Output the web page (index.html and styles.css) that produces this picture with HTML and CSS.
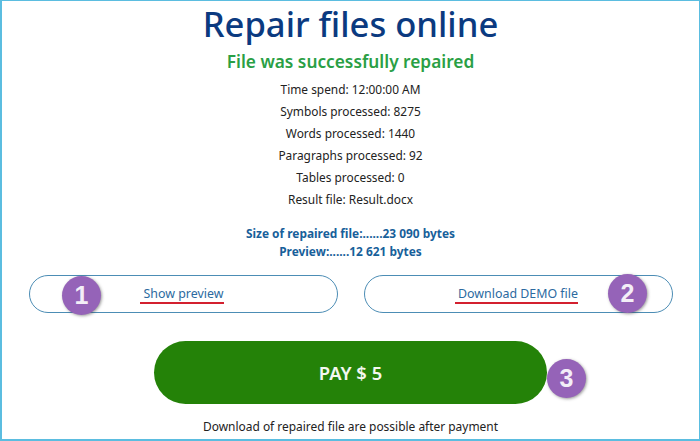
FILE: index.html
```html
<!DOCTYPE html>
<html lang="en">
<head>
<meta charset="utf-8">
<title>Repair files online</title>
<link rel="stylesheet" href="styles.css">
</head>
<body>
<main class="frame">
  <h1 class="title">Repair files online</h1>
  <h2 class="status">File was successfully repaired</h2>
  <ul class="stats">
    <li>Time spend: 12:00:00 AM</li>
    <li>Symbols processed: 8275</li>
    <li>Words processed: 1440</li>
    <li>Paragraphs processed: 92</li>
    <li>Tables processed: 0</li>
    <li>Result file: Result.docx</li>
  </ul>
  <div class="sizes">
    <div>Size of repaired file:......23 090 bytes</div>
    <div>Preview:......12 621 bytes</div>
  </div>
  <div class="actions">
    <a class="outline">
      <span class="label label-preview">Show preview</span>
      <span class="badge badge-1">1</span>
    </a>
    <a class="outline">
      <span class="label label-demo">Download DEMO file</span>
      <span class="badge badge-2">2</span>
    </a>
  </div>
  <div class="pay-row">
    <a class="pay">PAY $ 5</a>
    <span class="badge badge-3">3</span>
  </div>
  <p class="note">Download of repaired file are possible after payment</p>
</main>
</body>
</html>
```
FILE: styles.css
```css
* { box-sizing: border-box; }
html, body { margin: 0; padding: 0; }
body { width: 700px; height: 441px; background: #fff; font-family: "Noto Sans", "Open Sans", sans-serif; overflow: hidden; }
.frame {
  width: 700px; height: 441px;
  border: solid #5bbde0; border-width: 1px 1px 2px 2px;
  display: flex; flex-direction: column; align-items: center;
}
.title { margin: 0; font-size: 34.6px; line-height: 46px; font-weight: 500; color: #0b3a80; }
.status { margin: 3px 0 0; font-size: 17.3px; line-height: 24px; font-weight: 600; color: #2a9f45; }
.stats { list-style: none; margin: 4px 0 0; padding: 0; text-align: center; font-size: 11.9px; line-height: 22px; color: #222; }
.sizes { margin-top: 14px; text-align: center; font-size: 11.9px; line-height: 18px; font-weight: 700; color: #17609a; }
.actions { margin-top: 15px; display: flex; gap: 26px; align-self: flex-start; padding-left: 27px; }
.outline {
  position: relative; display: flex; align-items: center; justify-content: center;
  width: 309px; height: 38px; border: 1px solid #4c8db5; border-radius: 19px;
  font-size: 12.4px; color: #2c6aa0;
}
.label { border-bottom: 2px solid #d3202f; line-height: 17px; }
.label-preview { margin-left: -3px; padding: 0 1px 0 4px; }
.label-demo { margin-left: -4px; padding: 0 0 0 3px; }
.badge {
  position: absolute; width: 39px; height: 39px; border-radius: 50%;
  background: #9563b8; color: #f3eef7; box-shadow: 1px 1px 3px rgba(60,60,60,.5);
  display: flex; align-items: center; justify-content: center;
  font-family: "Liberation Sans", sans-serif; font-weight: 700; font-size: 25px;
}
.badge-1 { left: 32px; top: 0; }
.badge-2 { right: 25px; top: -2px; }
.pay-row { position: relative; margin-top: 28px; width: 393px; }
.pay {
  display: flex; align-items: center; justify-content: center;
  width: 393px; height: 63px; border-radius: 32px; background: #248208;
  color: #f4f8f0; font-size: 18.4px; font-weight: 600;
}
.badge-3 { left: 393px; top: 18px; }
.note { margin: 14px 0 0; font-size: 11.95px; line-height: 17px; color: #222; }
```
